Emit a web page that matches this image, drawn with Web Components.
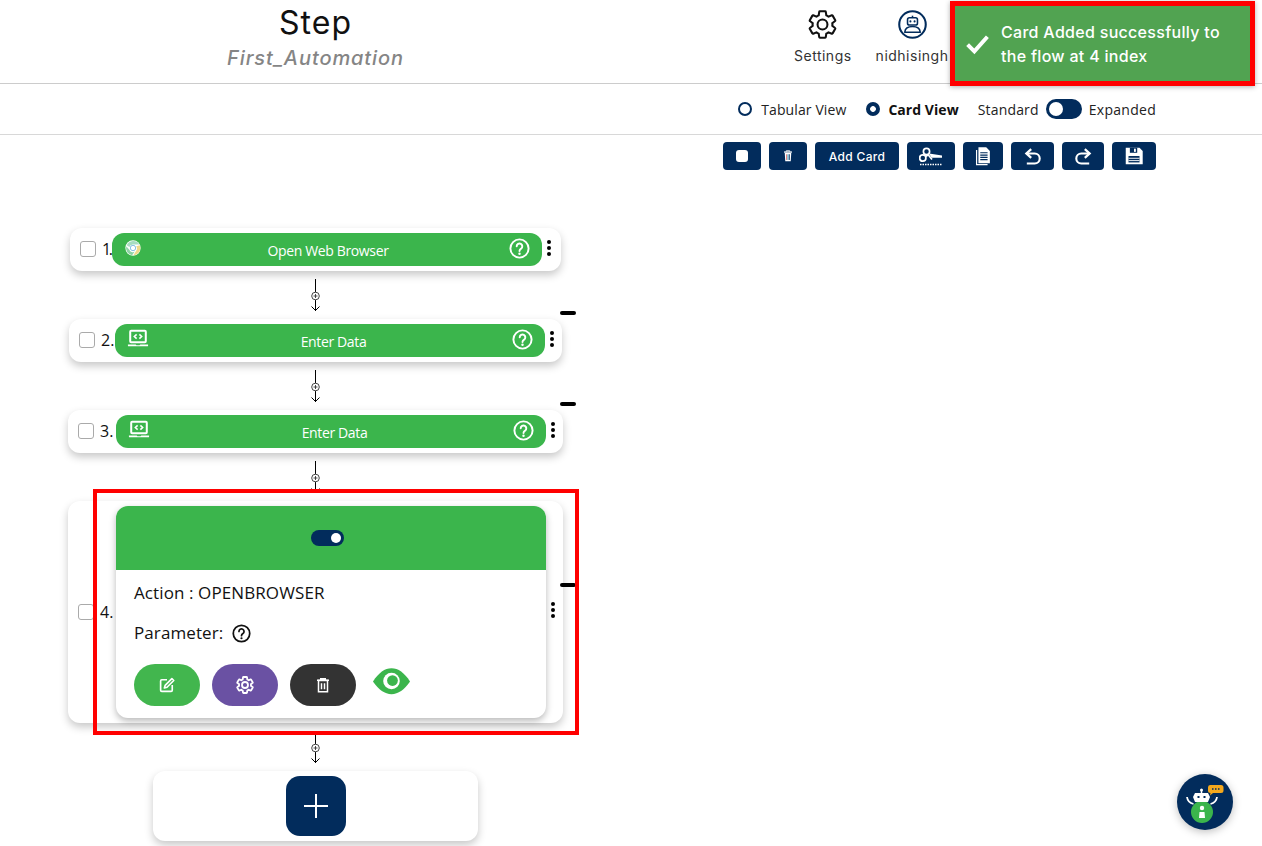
<!DOCTYPE html>
<html lang="en">
<head>
<meta charset="utf-8">
<title>Step</title>
<style>
  html, body { margin: 0; height: 846px; overflow: hidden; background: #fff; }
  body { position: relative; font-family: "Open Sans", "Noto Sans", sans-serif; color: #111; }
</style>
</head>
<body>
  <app-header title-text="Step" subtitle="First_Automation">
    <nav-item icon="gear" label="Settings"></nav-item>
    <nav-item icon="user" label="nidhisingh"></nav-item>
  </app-header>
  <view-bar></view-bar>
  <tool-bar>
    <tool-button icon="square" width="38"></tool-button>
    <tool-button icon="trash" width="38"></tool-button>
    <tool-button width="84">Add Card</tool-button>
    <tool-button icon="cut" width="48"></tool-button>
    <tool-button icon="paste" width="40"></tool-button>
    <tool-button icon="undo" width="43"></tool-button>
    <tool-button icon="redo" width="42"></tool-button>
    <tool-button icon="save" width="44"></tool-button>
  </tool-bar>

  <flow-list>
    <flow-card number="1." num-width="10" num-spacing="-2.5" width="491" no-dash>
      <action-pill icon="chrome" lead="23" label="Open Web Browser"></action-pill>
    </flow-card>
    <flow-connector></flow-connector>
    <flow-card number="2." num-width="14" width="493" dash-right="-14">
      <action-pill icon="laptop" lead="28" label="Enter Data"></action-pill>
    </flow-card>
    <flow-connector></flow-connector>
    <flow-card number="3." num-width="16" width="495">
      <action-pill icon="laptop" lead="28" label="Enter Data"></action-pill>
    </flow-card>
    <flow-connector></flow-connector>
    <flow-card number="4." num-width="16" width="495" dash-top="82">
      <action-detail action="OPENBROWSER"></action-detail>
    </flow-card>
    <flow-connector></flow-connector>
    <add-card></add-card>
  </flow-list>

  <red-frame></red-frame>
  <toast-message>Card Added successfully to the flow at 4 index</toast-message>
  <chat-bot></chat-bot>

<script>
const NAVY = '#022c5c';
const GREEN = '#3bb54c';

const svg = (box, body, size) =>
  `<svg xmlns="http://www.w3.org/2000/svg" viewBox="0 0 ${box} ${box}" width="${size}" height="${size}" style="display:block">${body}</svg>`;

const GEAR = 'M19.14 12.94c.04-.3.06-.61.06-.94 0-.32-.02-.64-.07-.94l2.03-1.58a.49.49 0 0 0 .12-.61l-1.92-3.32a.488.488 0 0 0-.59-.22l-2.39.96c-.5-.38-1.03-.7-1.62-.94l-.36-2.54a.484.484 0 0 0-.48-.41h-3.84c-.24 0-.43.17-.47.41l-.36 2.54c-.59.24-1.13.57-1.62.94l-2.39-.96c-.22-.08-.47 0-.59.22L2.74 8.87c-.12.21-.08.47.12.61l2.03 1.58c-.05.3-.09.63-.09.94s.02.64.07.94l-2.03 1.58a.49.49 0 0 0-.12.61l1.92 3.32c.12.22.37.29.59.22l2.39-.96c.5.38 1.03.7 1.62.94l.36 2.54c.05.24.24.41.48.41h3.84c.24 0 .44-.17.47-.41l.36-2.54c.59-.24 1.13-.56 1.62-.94l2.39.96c.22.08.47 0 .59-.22l1.92-3.32c.12-.22.07-.47-.12-.61l-2.01-1.58zM12 15.6c-1.98 0-3.6-1.62-3.6-3.6s1.62-3.6 3.6-3.6 3.6 1.62 3.6 3.6-1.62 3.6-3.6 3.6z';

const help = (size, color) => svg(24, `
  <circle cx="12" cy="12" r="10.4" fill="none" stroke="${color}" stroke-width="2.2"/>
  <path d="M8.8 9.400a3.200 3.200 0 1 1 5 2.700c-1.100.7-1.800 1.300-1.800 2.700" fill="none" stroke="${color}" stroke-width="2.200" stroke-linecap="round"/>
  <circle cx="12" cy="18" r="1.400" fill="${color}"/>`, size);

// Iconos de la aplicacion
const ICONS = {
  gear: svg(24, `<path d="${GEAR}" fill="none" stroke="#111" stroke-width="1.5"/>`, 33),
  user: svg(28, `
    <circle cx="14" cy="14" r="12.800" fill="none" stroke="${NAVY}" stroke-width="2"/>
    <path d="M14 5.500v2" stroke="${NAVY}" stroke-width="1.500"/>
    <rect x="9.200" y="7.500" width="9.600" height="7" rx="1.800" fill="none" stroke="${NAVY}" stroke-width="1.500"/>
    <circle cx="12" cy="11" r="1" fill="${NAVY}"/><circle cx="16" cy="11" r="1" fill="${NAVY}"/>
    <path d="M6.500 21.500c.4-3.800 3.400-5.500 7.500-5.500s7.100 1.700 7.500 5.500z" fill="none" stroke="${NAVY}" stroke-width="1.500" stroke-linejoin="round"/>`, 29),
  square: `<span style="display:block;width:12px;height:12px;border-radius:3px;background:#fff"></span>`,
  trash: svg(16, `
    <path d="M3.500 3.500h9" stroke="#fff" stroke-width="1.500"/>
    <path d="M6 3V2h4v1" fill="none" stroke="#fff"/>
    <path d="M4.300 4.500h7.400l-.6 9.500H4.900z" fill="#fff"/>
    <path d="M6.500 6v6.500" stroke="#d9534f" stroke-width="1"/><path d="M8 6v6.500" stroke="#2aa3c7" stroke-width="1"/><path d="M9.500 6v6.500" stroke="#022c5c" stroke-width="1"/>`, 14),
  cut: svg(24, `
    <g fill="none" stroke="#fff" stroke-width="1.700">
      <circle cx="7.500" cy="7.500" r="3.100"/><circle cx="3.800" cy="14" r="3.100"/>
      <path d="M9 10.500l4 5M6.500 12.500l3.500-2"/>
    </g>
    <path d="M10 9.500l13 2v2.200H12.500z" fill="#fff"/>
    <path d="M1 20.500h22" stroke="#fff" stroke-width="1.400" stroke-dasharray="1.500 1"/>`, 24),
  paste: svg(24, `
    <path d="M5 5.500v16h12" fill="none" stroke="#fff" stroke-width="1.300"/>
    <path d="M7 2.500h8.500l4 4V20H7z" fill="#fff"/>
    <path d="M9 8.500h8M9 11h8M9 13.500h8M9 16h8" stroke="${NAVY}" stroke-width="1.200"/>`, 22),
  undo: svg(24, `<path d="M10.500 3.500L5 8.500l5.500 5" fill="none" stroke="#fff" stroke-width="2.600"/><path d="M5 8.500h9.500a5.700 5.700 0 0 1 0 11.500H5.500" fill="none" stroke="#fff" stroke-width="2.400"/>`, 21),
  redo: svg(24, `<path d="M13.500 3.500L19 8.500l-5.500 5" fill="none" stroke="#fff" stroke-width="2.600"/><path d="M19 8.500H9.500a5.700 5.700 0 0 0 0 11.500h9" fill="none" stroke="#fff" stroke-width="2.400"/>`, 21),
  save: svg(24, `
    <path d="M3 3h15l3.500 3.500V21H3z" fill="#fff"/>
    <rect x="7.500" y="3" width="8" height="5.500" fill="${NAVY}"/><rect x="12" y="4" width="2" height="3.500" fill="#fff"/>
    <rect x="6" y="12" width="12" height="7" fill="${NAVY}"/><path d="M6 14.500h12M6 17h12" stroke="#fff" stroke-width="1"/>`, 22),
  chrome: svg(20, `
    <circle cx="10" cy="10" r="8.500" fill="#fff"/>
    <path d="M3 7a8 8 0 0 1 14-1h-7a4 4 0 0 0-4 3z" fill="#a7dcc0"/>
    <path d="M17.500 7a8 8 0 0 1-7 11l3-5a4 4 0 0 0 0-5z" fill="#efd98a"/>
    <path d="M2.500 8a8 8 0 0 0 6.500 10l3-4a4 4 0 0 1-6-2z" fill="#8fd3a5"/>
    <circle cx="10" cy="10" r="3" fill="#fff" stroke="#7cb9e0" stroke-width="1"/>`, 18),
  laptop: svg(24, `
    <rect x="3.500" y="3" width="17" height="12.500" rx="1" fill="none" stroke="#fff" stroke-width="2.200"/>
    <path d="M1 18h8.500l.8.900h3.400l.8-.9H23v1.300c0 .5-.4.700-.8.700H1.800c-.4 0-.8-.2-.8-.7z" fill="#fff"/>
    <path d="M10.500 7l-2.500 2.300 2.500 2.300M13.500 7l2.500 2.300-2.500 2.300" fill="none" stroke="#fff" stroke-width="1.700"/>`, 22)
};

class AppHeader extends HTMLElement {
  constructor() {
    super();
    this.attachShadow({ mode: 'open' });
    this.shadowRoot.innerHTML = `
      <style>
        :host { display: flex; height: 83px; border-bottom: 1px solid #ccc; box-sizing: content-box; font-family: Inter, "Open Sans", sans-serif; }
        .title { width: 631px; display: flex; flex-direction: column; align-items: center; }
        h1 { margin: 3px 0 0; font-size: 32px; line-height: 40px; font-weight: 400; color: #111; letter-spacing: 1px; }
        p { margin: 2px 0 0; font-size: 20px; line-height: 26px; font-style: italic; font-weight: 500; color: #858585; letter-spacing: .9px; }
        .nav { display: flex; gap: 24px; padding-left: 163px; }
      </style>
      <div class="title">
        <h1>${this.getAttribute('title-text')}</h1>
        <p>${this.getAttribute('subtitle')}</p>
      </div>
      <div class="nav"><slot></slot></div>`;
  }
}

class NavItem extends HTMLElement {
  constructor() {
    super();
    this.attachShadow({ mode: 'open' });
    this.shadowRoot.innerHTML = `
      <style>
        :host { display: flex; flex-direction: column; align-items: center; padding-top: 8px; font-size: 14px; color: #333; letter-spacing: .5px; }
        .icon { height: 33px; display: flex; align-items: center; }
        span { margin-top: 5px; line-height: 20px; }
      </style>
      <div class="icon">${ICONS[this.getAttribute('icon')]}</div>
      <span>${this.getAttribute('label')}</span>`;
  }
}

class ViewBar extends HTMLElement {
  constructor() {
    super();
    this.attachShadow({ mode: 'open' });
    this.shadowRoot.innerHTML = `
      <style>
        :host { display: flex; justify-content: flex-end; align-items: center; height: 50px; padding-right: 106px; border-bottom: 1px solid #d8d8d8; font-size: 14px; color: #222; letter-spacing: .17px; }
        label { display: flex; align-items: center; gap: 9px; }
        .radio { width: 14px; height: 14px; box-sizing: border-box; border-radius: 50%; border: 2px solid ${NAVY}; }
        .radio.on { background: radial-gradient(circle, #fff 0 2.500px, ${NAVY} 3.200px); }
        .tab { margin-right: 20px; letter-spacing: .1px; }
        .card { gap: 8px; margin-right: 19px; font-weight: 700; color: #111; letter-spacing: .05px; }
        .switch { width: 36px; height: 20px; margin: 0 7px 0 7px; border-radius: 10px; background: ${NAVY}; position: relative; }
        .switch::after { content: ""; position: absolute; left: 3px; top: 3px; width: 14px; height: 14px; border-radius: 50%; background: #fff; }
        .exp { letter-spacing: .28px; }
      </style>
      <label class="tab"><span class="radio"></span>Tabular View</label>
      <label class="card"><span class="radio on"></span>Card View</label>
      <span>Standard</span><span class="switch"></span><span class="exp">Expanded</span>`;
  }
}

class ToolBar extends HTMLElement {
  constructor() {
    super();
    this.attachShadow({ mode: 'open' });
    this.shadowRoot.innerHTML = `
      <style>
        :host { display: flex; justify-content: flex-end; gap: 8px; padding: 7px 106px 0 0; }
      </style>
      <slot></slot>`;
  }
}

class ToolButton extends HTMLElement {
  constructor() {
    super();
    this.attachShadow({ mode: 'open' });
    const icon = this.getAttribute('icon');
    this.shadowRoot.innerHTML = `
      <style>
        :host { display: flex; align-items: center; justify-content: center; height: 28px; width: ${this.getAttribute('width')}px; border-radius: 4px; background: ${NAVY}; color: #fff; font: 500 12px Inter, sans-serif; letter-spacing: .35px; }
      </style>
      ${icon ? ICONS[icon] : '<slot></slot>'}`;
  }
}

class FlowList extends HTMLElement {
  constructor() {
    super();
    this.attachShadow({ mode: 'open' });
    this.shadowRoot.innerHTML = `
      <style>
        :host { display: flex; flex-direction: column; align-items: center; width: 631px; padding-top: 58px; }
      </style>
      <slot></slot>`;
  }
}

class FlowCard extends HTMLElement {
  constructor() {
    super();
    this.attachShadow({ mode: 'open' });
    const top = this.getAttribute('dash-top') || -8;
    const right = this.getAttribute('dash-right') || -13;
    const dash = this.hasAttribute('no-dash') ? '' : `<i class="dash" style="top:${top}px;right:${right}px"></i>`;
    this.shadowRoot.innerHTML = `
      <style>
        :host { display: flex; align-items: center; position: relative; box-sizing: border-box; width: ${this.getAttribute('width')}px; padding: 5px 0 5px 10px; border-radius: 12px; background: #fff; box-shadow: 0 4px 8px rgba(0,0,0,.22); }
        .check { flex: none; width: 16px; height: 16px; margin-bottom: 1px; box-sizing: border-box; border: 1px solid #aaa; border-radius: 3px; background: #fff; }
        .num { flex: none; width: ${this.getAttribute('num-width')}px; margin: 0 0 1px 6px; font-size: 16px; white-space: nowrap; color: #111; letter-spacing: ${this.getAttribute('num-spacing') || 0}px; }
        .kebab { flex: none; margin: 0 0 4px 5px; display: flex; flex-direction: column; gap: 2px; }
        .kebab b { width: 4px; height: 4px; border-radius: 50%; background: #000; }
        .dash { position: absolute; width: 16px; height: 4px; border-radius: 2px; background: #000; }
      </style>
      <span class="check"></span>
      <span class="num">${this.getAttribute('number')}</span>
      <slot></slot>
      <span class="kebab"><b></b><b></b><b></b></span>
      ${dash}`;
  }
}

class ActionPill extends HTMLElement {
  constructor() {
    super();
    this.attachShadow({ mode: 'open' });
    this.shadowRoot.innerHTML = `
      <style>
        :host { flex: none; display: flex; align-items: center; justify-content: space-between; box-sizing: border-box; width: 430px; height: 33px; padding: 0 12px; border-radius: 12px; background: ${GREEN}; color: #fff; font-size: 14px; letter-spacing: -.36px; }
        .lead { width: ${this.getAttribute('lead')}px; display: flex; margin-bottom: 3px; }
        .help { margin-bottom: 3px; }
        span { padding-top: 2px; }
      </style>
      <div class="lead">${ICONS[this.getAttribute('icon')]}</div>
      <span>${this.getAttribute('label')}</span>
      <div class="help">${help(21, '#fff')}</div>`;
  }
}

class ActionDetail extends HTMLElement {
  constructor() {
    super();
    this.attachShadow({ mode: 'open' });
    this.shadowRoot.innerHTML = `
      <style>
        :host { flex: none; display: block; width: 430px; height: 212px; border-radius: 12px; background: #fff; box-shadow: 0 3px 7px rgba(0,0,0,.28); font-size: 17px; color: #111; letter-spacing: .1px; }
        .head { height: 64px; display: flex; align-items: center; justify-content: center; border-radius: 12px 12px 0 0; background: ${GREEN}; }
        .toggle { width: 33px; height: 16px; margin-right: 7px; border-radius: 8px; background: ${NAVY}; position: relative; }
        .toggle::after { content: ""; position: absolute; right: 3px; top: 3px; width: 10px; height: 10px; border-radius: 50%; background: #fff; }
        .body { padding: 12px 18px; }
        .row { display: flex; align-items: center; gap: 9px; line-height: 22px; }
        .row + .row { margin-top: 18px; }
        .btns { display: flex; align-items: flex-start; gap: 12px; margin-top: 20px; }
        .btn { width: 66px; height: 42px; border-radius: 21px; display: flex; align-items: center; justify-content: center; }
        .edit { background: #42b64e; }
        .gear { background: #6a51a3; }
        .del { background: #333; }
        .eye { margin: -2px 0 0 4px; }
      </style>
      <div class="head"><span class="toggle"></span></div>
      <div class="body">
        <div class="row">Action : ${this.getAttribute('action')}</div>
        <div class="row">Parameter: ${help(19, '#111')}</div>
        <div class="btns">
          <span class="btn edit">${svg(24, `<path d="M12 5H5a1.500 1.500 0 0 0-1.500 1.500V19A1.500 1.500 0 0 0 5 20.500h12.500A1.500 1.500 0 0 0 19 19v-7" fill="none" stroke="#fff" stroke-width="2.200"/><path d="M18.500 3.500l2.500 2.500-9 9-3.500 1 1-3.500z" fill="none" stroke="#fff" stroke-width="2.200" stroke-linejoin="round"/>`, 18)}</span>
          <span class="btn gear">${svg(24, `<path d="${GEAR}" fill="none" stroke="#fff" stroke-width="2.200"/>`, 20)}</span>
          <span class="btn del">${svg(24, `<path d="M4 5.500h16M9 5V3.500h6V5" fill="none" stroke="#fff" stroke-width="2"/><path d="M6 6v15h12V6z" fill="none" stroke="#fff" stroke-width="2"/><path d="M10 9.500v8M14 9.500v8" stroke="#fff" stroke-width="2"/>`, 18)}</span>
          <span class="eye">${svg(40, `<path d="M1 20C7 11 13 6.500 20 6.500S33 11 39 20c-6 8.500-12 13-19 13S7 28.500 1 20z" fill="${GREEN}"/><circle cx="20" cy="19.500" r="8.500" fill="#fff"/><circle cx="21" cy="19" r="5.500" fill="${GREEN}"/>`, 39)}</span>
        </div>
      </div>`;
  }
}

class FlowConnector extends HTMLElement {
  constructor() {
    super();
    this.attachShadow({ mode: 'open' });
    this.shadowRoot.innerHTML = `
      <style>
        :host { display: block; height: 32px; margin: 8px 0; }
      </style>
      <svg xmlns="http://www.w3.org/2000/svg" width="13" height="32" style="display:block">
        <path d="M6.500 0v32M2.500 27.500L6.500 31.500l4-4" fill="none" stroke="#000" stroke-width="1"/>
        <circle cx="6.500" cy="17" r="3.800" fill="#fff" stroke="#444"/>
        <path d="M4.500 17h4M6.500 15v4" stroke="#222" stroke-width=".8"/>
      </svg>`;
  }
}

class AddCard extends HTMLElement {
  constructor() {
    super();
    this.attachShadow({ mode: 'open' });
    this.shadowRoot.innerHTML = `
      <style>
        :host { display: flex; justify-content: center; box-sizing: border-box; width: 325px; height: 70px; padding: 5px 0; border-radius: 12px; background: #fff; box-shadow: 0 4px 8px rgba(0,0,0,.22); }
        .plus { width: 60px; height: 60px; border-radius: 14px; background: ${NAVY}; display: flex; align-items: center; justify-content: center; }
      </style>
      <span class="plus">${svg(24, `<path d="M12 0v24M0 12h24" stroke="#fff" stroke-width="2" stroke-linecap="round"/>`, 24)}</span>`;
  }
}

// Marco rojo de la captura, encima de la tarjeta 4
class RedFrame extends HTMLElement {
  constructor() {
    super();
    this.attachShadow({ mode: 'open' });
    this.shadowRoot.innerHTML = `
      <style>
        :host { display: block; position: absolute; left: 93px; top: 489px; width: 486px; height: 246px; box-sizing: border-box; border: 4px solid #f00; pointer-events: none; }
      </style>`;
  }
}

class ToastMessage extends HTMLElement {
  constructor() {
    super();
    this.attachShadow({ mode: 'open' });
    this.shadowRoot.innerHTML = `
      <style>
        :host { display: flex; align-items: center; gap: 11px; position: absolute; left: 950px; top: 1px; width: 305px; height: 85px; box-sizing: border-box; padding: 0 15px 0 10px; border: 5px solid #f00; background: #51a351; color: #fff; font: 500 16px/24px Inter, sans-serif; letter-spacing: .3px; box-shadow: 0 1px 5px rgba(0,0,0,.3); }
        .tick { flex: none; }
      </style>
      <span class="tick">${svg(24, `<path d="M2.500 13l6.500 6.500L21.500 5.500" fill="none" stroke="#fff" stroke-width="3.800"/>`, 25)}</span>
      <span class="text"><slot></slot></span>`;
  }
}

class ChatBot extends HTMLElement {
  constructor() {
    super();
    this.attachShadow({ mode: 'open' });
    this.shadowRoot.innerHTML = `
      <style>
        :host { display: block; position: absolute; left: 1177px; top: 774px; width: 56px; height: 56px; border-radius: 50%; background: ${NAVY}; box-shadow: 0 2px 8px rgba(0,0,0,.25); }
      </style>
      ${svg(56, `
        <path d="M33 11h11a2.500 2.500 0 0 1 2.500 2.500v3A2.500 2.500 0 0 1 44 19h-8l-3 2.500.5-2.500A2.500 2.500 0 0 1 31 16.500v-3A2.500 2.500 0 0 1 33 11z" fill="#f4a81d"/>
        <path d="M35 15h1.500M38 15h1.500M41 15h1.500" stroke="${NAVY}" stroke-width="1.500"/>
        <circle cx="25" cy="38" r="11" fill="${GREEN}"/>
        <circle cx="24.500" cy="16" r="1.500" fill="#fff"/>
        <path d="M24.500 16v3" stroke="#fff" stroke-width="1.500"/>
        <path d="M18 19h13l2 4-2 5H18l-2-5z" fill="#fff"/>
        <rect x="20.500" y="22" width="2" height="2" fill="${NAVY}"/><rect x="26.500" y="22" width="2" height="2" fill="${NAVY}"/>
        <path d="M10 23c.5 4 2.500 6 6.500 7M40 23c-.5 4-2.500 6-6.500 7" fill="none" stroke="#fff" stroke-width="1.800"/>
        <circle cx="25" cy="34" r="2.200" fill="#fff"/><path d="M22.500 38h5l.5 6h-6z" fill="#fff"/>`, 56)}`;
  }
}

customElements.define('app-header', AppHeader);
customElements.define('nav-item', NavItem);
customElements.define('view-bar', ViewBar);
customElements.define('tool-bar', ToolBar);
customElements.define('tool-button', ToolButton);
customElements.define('flow-list', FlowList);
customElements.define('flow-card', FlowCard);
customElements.define('action-pill', ActionPill);
customElements.define('action-detail', ActionDetail);
customElements.define('flow-connector', FlowConnector);
customElements.define('add-card', AddCard);
customElements.define('red-frame', RedFrame);
customElements.define('toast-message', ToastMessage);
customElements.define('chat-bot', ChatBot);
</script>
</body>
</html>
